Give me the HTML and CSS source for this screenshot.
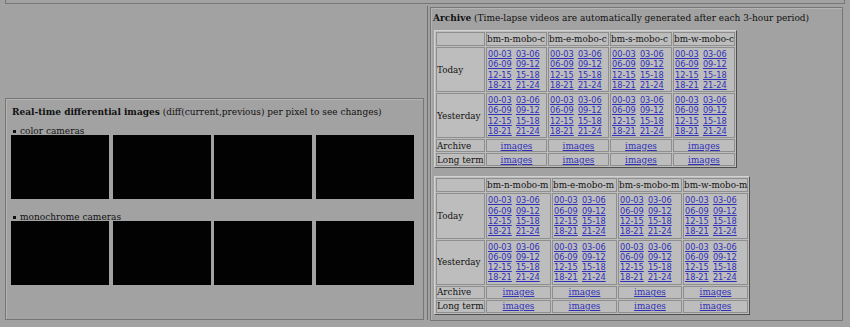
FILE: index.html
```html
<!DOCTYPE html>
<html>
<head>
<meta charset="utf-8">
<link rel="stylesheet" href="styles.css">
</head>
<body>
<div class="top"></div>
<div class="main">
  <div class="left">
    <div class="spacer"></div>
    <div class="box diff">
      <div class="title"><b>Real-time differential images</b> (diff(current,previous) per pixel to see changes)</div>
      <div class="item"><span class="dot"></span>color cameras</div>
      <div class="imgs"><div class="img"></div><div class="img"></div><div class="img"></div><div class="img"></div></div>
      <div class="item item2"><span class="dot"></span>monochrome cameras</div>
      <div class="imgs"><div class="img"></div><div class="img"></div><div class="img"></div><div class="img"></div></div>
    </div>
  </div>
  <div class="right">
    <div class="box archive">
      <div class="title"><b>Archive</b> (Time-lapse videos are automatically generated after each 3-hour period)</div>
      <table class="t1">
        <colgroup><col class="c0"><col class="c1"><col class="c1"><col class="c2"><col class="c2"></colgroup>
        <tr class="hd"><td></td><td>bm-n-mobo-c</td><td>bm-e-mobo-c</td><td>bm-s-mobo-c</td><td>bm-w-mobo-c</td></tr>
        <tr class="lk"><td>Today</td>
          <td class="links"><a href="#">00-03</a> <a href="#">03-06</a><br><a href="#">06-09</a> <a href="#">09-12</a><br><a href="#">12-15</a> <a href="#">15-18</a><br><a href="#">18-21</a> <a href="#">21-24</a></td>
          <td class="links"><a href="#">00-03</a> <a href="#">03-06</a><br><a href="#">06-09</a> <a href="#">09-12</a><br><a href="#">12-15</a> <a href="#">15-18</a><br><a href="#">18-21</a> <a href="#">21-24</a></td>
          <td class="links"><a href="#">00-03</a> <a href="#">03-06</a><br><a href="#">06-09</a> <a href="#">09-12</a><br><a href="#">12-15</a> <a href="#">15-18</a><br><a href="#">18-21</a> <a href="#">21-24</a></td>
          <td class="links"><a href="#">00-03</a> <a href="#">03-06</a><br><a href="#">06-09</a> <a href="#">09-12</a><br><a href="#">12-15</a> <a href="#">15-18</a><br><a href="#">18-21</a> <a href="#">21-24</a></td>
        </tr>
        <tr class="lk"><td>Yesterday</td>
          <td class="links"><a href="#">00-03</a> <a href="#">03-06</a><br><a href="#">06-09</a> <a href="#">09-12</a><br><a href="#">12-15</a> <a href="#">15-18</a><br><a href="#">18-21</a> <a href="#">21-24</a></td>
          <td class="links"><a href="#">00-03</a> <a href="#">03-06</a><br><a href="#">06-09</a> <a href="#">09-12</a><br><a href="#">12-15</a> <a href="#">15-18</a><br><a href="#">18-21</a> <a href="#">21-24</a></td>
          <td class="links"><a href="#">00-03</a> <a href="#">03-06</a><br><a href="#">06-09</a> <a href="#">09-12</a><br><a href="#">12-15</a> <a href="#">15-18</a><br><a href="#">18-21</a> <a href="#">21-24</a></td>
          <td class="links"><a href="#">00-03</a> <a href="#">03-06</a><br><a href="#">06-09</a> <a href="#">09-12</a><br><a href="#">12-15</a> <a href="#">15-18</a><br><a href="#">18-21</a> <a href="#">21-24</a></td>
        </tr>
        <tr class="one"><td>Archive</td><td class="c"><a href="#">images</a></td><td class="c"><a href="#">images</a></td><td class="c"><a href="#">images</a></td><td class="c"><a href="#">images</a></td></tr>
        <tr class="one"><td>Long term</td><td class="c"><a href="#">images</a></td><td class="c"><a href="#">images</a></td><td class="c"><a href="#">images</a></td><td class="c"><a href="#">images</a></td></tr>
      </table>
      <table class="t2">
        <colgroup><col class="c0"><col class="d1"><col class="d1"><col class="d2"><col class="d3"></colgroup>
        <tr class="hd"><td></td><td>bm-n-mobo-m</td><td>bm-e-mobo-m</td><td>bm-s-mobo-m</td><td>bm-w-mobo-m</td></tr>
        <tr class="lk"><td>Today</td>
          <td class="links"><a href="#">00-03</a> <a href="#">03-06</a><br><a href="#">06-09</a> <a href="#">09-12</a><br><a href="#">12-15</a> <a href="#">15-18</a><br><a href="#">18-21</a> <a href="#">21-24</a></td>
          <td class="links"><a href="#">00-03</a> <a href="#">03-06</a><br><a href="#">06-09</a> <a href="#">09-12</a><br><a href="#">12-15</a> <a href="#">15-18</a><br><a href="#">18-21</a> <a href="#">21-24</a></td>
          <td class="links"><a href="#">00-03</a> <a href="#">03-06</a><br><a href="#">06-09</a> <a href="#">09-12</a><br><a href="#">12-15</a> <a href="#">15-18</a><br><a href="#">18-21</a> <a href="#">21-24</a></td>
          <td class="links"><a href="#">00-03</a> <a href="#">03-06</a><br><a href="#">06-09</a> <a href="#">09-12</a><br><a href="#">12-15</a> <a href="#">15-18</a><br><a href="#">18-21</a> <a href="#">21-24</a></td>
        </tr>
        <tr class="lk"><td>Yesterday</td>
          <td class="links"><a href="#">00-03</a> <a href="#">03-06</a><br><a href="#">06-09</a> <a href="#">09-12</a><br><a href="#">12-15</a> <a href="#">15-18</a><br><a href="#">18-21</a> <a href="#">21-24</a></td>
          <td class="links"><a href="#">00-03</a> <a href="#">03-06</a><br><a href="#">06-09</a> <a href="#">09-12</a><br><a href="#">12-15</a> <a href="#">15-18</a><br><a href="#">18-21</a> <a href="#">21-24</a></td>
          <td class="links"><a href="#">00-03</a> <a href="#">03-06</a><br><a href="#">06-09</a> <a href="#">09-12</a><br><a href="#">12-15</a> <a href="#">15-18</a><br><a href="#">18-21</a> <a href="#">21-24</a></td>
          <td class="links"><a href="#">00-03</a> <a href="#">03-06</a><br><a href="#">06-09</a> <a href="#">09-12</a><br><a href="#">12-15</a> <a href="#">15-18</a><br><a href="#">18-21</a> <a href="#">21-24</a></td>
        </tr>
        <tr class="one"><td>Archive</td><td class="c"><a href="#">images</a></td><td class="c"><a href="#">images</a></td><td class="c"><a href="#">images</a></td><td class="c"><a href="#">images</a></td></tr>
        <tr class="one"><td>Long term</td><td class="c"><a href="#">images</a></td><td class="c"><a href="#">images</a></td><td class="c"><a href="#">images</a></td><td class="c"><a href="#">images</a></td></tr>
      </table>
    </div>
  </div>
</div>
</body>
</html>
```
FILE: styles.css
```css
html, body {
  margin: 0;
  padding: 0;
}
body {
  background: #a2a2a2;
  font-family: "DejaVu Serif", serif;
  font-size: 9px;
  line-height: 11px;
  color: #111;
  height: 327px;
  overflow: hidden;
}
.top {
  margin: 0 5px;
  height: 3px;
  border: 1px solid #777;
  border-top: none;
}
.main {
  display: flex;
  margin-top: 2px;
}
.left {
  margin-left: 5px;
  width: 422px;
  border-right: 1px solid #707070;
  height: 314px;
}
.spacer {
  height: 92px;
}
.box {
  border: 1px solid #767676;
  box-shadow: inset 1px 1px 0 #b4b4b4;
}
.diff {
  width: 417px;
  height: 220px;
}
.diff .title {
  padding: 8px 0 0 6px;
}
.item {
  margin-top: 10px;
  padding-left: 7px;
  line-height: 7px;
}
.item2 {
  margin-top: 15px;
}
.dot {
  display: inline-block;
  width: 3px;
  height: 3px;
  background: #111;
  vertical-align: 1px;
  margin-right: 4px;
}
.imgs {
  display: flex;
  justify-content: space-between;
  margin-left: 5px;
  width: 403px;
}
.img {
  width: 98px;
  height: 64px;
  background: #020202;
}
.right {
  margin-left: 2px;
  margin-top: 1px;
}
.archive {
  width: 411px;
  height: 312px;
}
.archive .title {
  padding: 5px 0 0 2px;
}
table {
  border-collapse: separate;
  border-spacing: 1px;
  border: 1px solid;
  border-color: #d2d2d2 #4f4f4f #4f4f4f #d2d2d2;
  background: #bdbdbd;
  table-layout: fixed;
  margin-left: 3px;
  font-size: 8.8px;
  line-height: 10px;
}
.t1 {
  margin-top: 6px;
  width: 303px;
}
.t2 {
  margin-top: 8px;
  width: 316px;
}
col.c0 { width: 49px; }
col.c1 { width: 61px; }
col.c2 { width: 62px; }
col.d1 { width: 65px; }
col.d2 { width: 64px; }
col.d3 { width: 65px; }
td {
  border: 1px solid #8e8e8e;
  padding: 0;
  white-space: nowrap;
}
tr.hd td {
  height: 12px;
}
tr.lk td {
  height: 41px;
}
.t2 tr.lk td {
  height: 40px;
}
tr.one td {
  height: 11px;
}
td.links {
  font-family: "DejaVu Sans", sans-serif;
  font-size: 8.2px;
  line-height: 10.3px;
  word-spacing: 1.5px;
  padding: 1px 0 1px 1px;
}
td.c {
  text-align: center;
}
a {
  color: #3030b8;
  text-decoration: underline;
}
```
